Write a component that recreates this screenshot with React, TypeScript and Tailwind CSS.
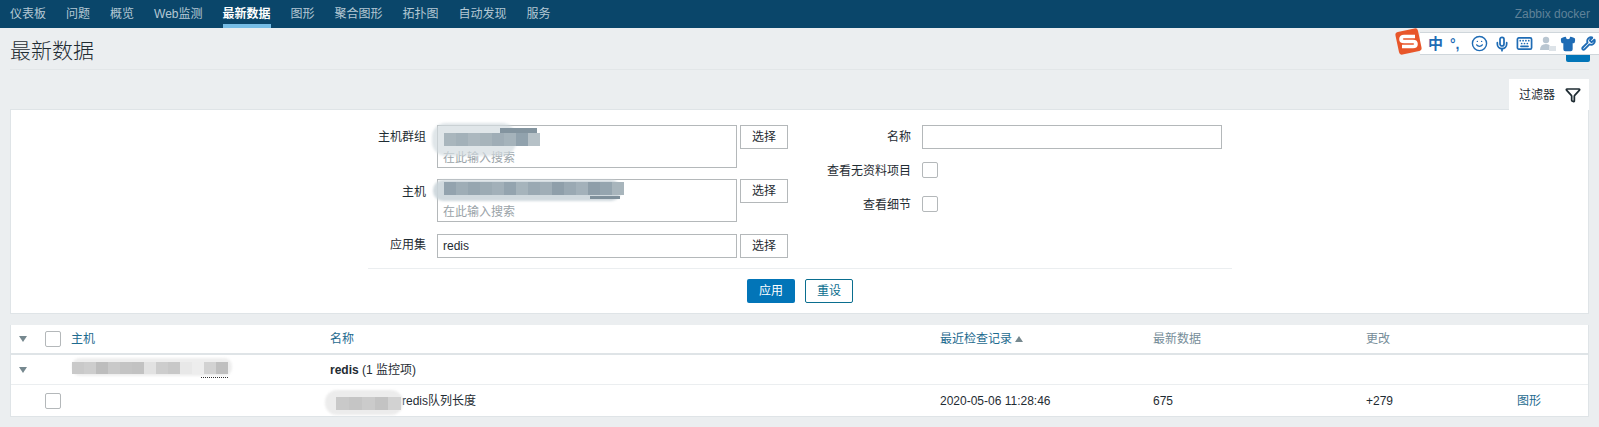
import { Funnel, Keyboard, Mic, Shirt, Smile, Wrench } from "lucide-react";

const font = { fontFamily: '"Liberation Sans","Noto Sans CJK SC",sans-serif' };
const nav = ["仪表板", "问题", "概览", "Web监测", "最新数据", "图形", "聚合图形", "拓扑图", "自动发现", "服务"];

function Mosaic({ colors, cell, className }: { colors: string[]; cell: string; className: string }) {
  return (
    <div className={"absolute flex " + className}>
      {colors.map((c, i) => (
        <span key={i} className={"h-full " + cell} style={{ backgroundColor: c }} />
      ))}
    </div>
  );
}

function Pick() {
  return (
    <button className="h-6 w-12 shrink-0 border border-[#b4b8ba] bg-white text-xs text-[#1f2c33]">选择</button>
  );
}

function Multi() {
  return (
    <div className="flex h-[43px] w-[300px] items-end border border-[#b4b8ba] bg-white px-[5px] pb-[1px] text-xs text-[#9aa3a8]">
      在此输入搜索
    </div>
  );
}

function Label({ children, w, pt = "pt-[3px]" }: { children: string; w: string; pt?: string }) {
  return <div className={"shrink-0 text-right text-xs leading-[18px] text-[#1f2c33] " + pt + " " + w}>{children}</div>;
}

function Check() {
  return <div className="h-4 w-4 rounded-[2px] border border-[#b4b8ba] bg-white" />;
}

function Tri() {
  return (
    <div className="flex pl-[8px]">
      <span className="h-0 w-0 border-x-[4px] border-t-[6px] border-x-transparent border-t-[#76888f]" />
    </div>
  );
}

export default function App() {
  return (
    <div className="relative h-[427px] w-[1599px] overflow-hidden bg-[#ebeef0] text-xs" style={font}>
      <header className="flex h-7 items-start justify-between bg-[#0a466a] pr-[9px]">
        <nav className="flex">
          {nav.map((n, i) => (
            <div
              key={n}
              className={
                "h-7 px-[10px] pt-[6px] leading-[14px] " + (i === 4 ? "font-bold text-white" : "text-[#b4c8d4]")
              }
            >
              <div className={"pt-[1px] " + (i === 4 ? "h-[22px] border-b-4 border-[#76bde6]" : "")}>{n}</div>
            </div>
          ))}
        </nav>
        <div className="pt-[7px] leading-[14px] text-[#5f8299]">Zabbix docker</div>
      </header>

      <div className="mx-[10px] flex h-[42px] items-center border-b border-[#e2e6e8] pt-[4px] text-[21px] font-light leading-none text-[#1f2c33]">
        最新数据
      </div>

      <div className="mx-[10px] mt-[9px] flex h-[31px] justify-end border-b border-[#dfe4e7]">
        <div className="flex h-[31px] w-20 items-center gap-[10px] bg-white pl-[10px] text-[#1f2c33]">
          过滤器
          <Funnel size={16} strokeWidth={2.6} className="text-[#1f2c33]" />
        </div>
      </div>

      <section className="mx-[10px] h-[204px] border-x border-b border-[#dfe4e7] bg-white pt-[15px]">
        <div className="ml-[357px] w-[864px]">
          <div className="flex h-[144px] border-b border-[#ebeef0]">
            <div className="w-[420px]">
              <div className="flex h-[54px] gap-[11px]">
                <Label w="w-[58px]">主机群组</Label>
                <Multi />
                <div className="ml-[-8px]"><Pick /></div>
              </div>
              <div className="flex h-[55px] gap-[11px]">
                <Label w="w-[58px]" pt="pt-[4px]">主机</Label>
                <Multi />
                <div className="ml-[-8px]"><Pick /></div>
              </div>
              <div className="flex gap-[11px]">
                <Label w="w-[58px]" pt="pt-[2px]">应用集</Label>
                <div className="flex h-6 w-[300px] items-center border border-[#b4b8ba] bg-white px-[5px] text-[#1f2c33]">redis</div>
                <div className="ml-[-8px]"><Pick /></div>
              </div>
            </div>
            <div>
              <div className="flex h-[37px] gap-[11px]">
                <Label w="w-[123px]">名称</Label>
                <div className="h-6 w-[300px] border border-[#b4b8ba] bg-white" />
              </div>
              <div className="flex h-[34px] gap-[11px]">
                <Label w="w-[123px]" pt="pt-[0px]">查看无资料项目</Label>
                <Check />
              </div>
              <div className="flex gap-[11px]">
                <Label w="w-[123px]" pt="pt-[0px]">查看细节</Label>
                <Check />
              </div>
            </div>
          </div>
          <div className="flex justify-center gap-[10px] pt-[10px]">
            <button className="h-6 w-12 rounded-[2px] bg-[#0275b8] text-xs text-white">应用</button>
            <button className="h-6 w-12 rounded-[2px] border border-[#0a6e8f] bg-white text-xs text-[#0a6e8f]">重设</button>
          </div>
        </div>
      </section>

      <section className="mx-[10px] mt-[11px] h-[92px] border-x border-b border-[#dfe4e7] bg-white">
        <div className="grid h-[30px] grid-cols-[34px_26px_259px_610px_213px_213px_1fr] items-center border-b-2 border-[#dfe4e7] text-[#1e6b8f]">
          <Tri />
          <Check />
          <div>主机</div>
          <div>名称</div>
          <div className="flex items-center gap-[3px]">
            最近检查记录
            <span className="h-0 w-0 border-x-[4px] border-b-[6px] border-x-transparent border-b-[#76888f]" />
          </div>
          <div className="text-[#768d99]">最新数据</div>
          <div className="text-[#768d99]">更改</div>
        </div>
        <div className="grid h-[30px] grid-cols-[34px_26px_259px_1fr] items-center border-b border-[#ebeef0] text-[#1f2c33]">
          <Tri />
          <div />
          <div />
          <div><b>redis</b> (1 监控项)</div>
        </div>
        <div className="grid h-[31px] grid-cols-[34px_26px_259px_610px_213px_213px_151px_1fr] items-center text-[#1f2c33]">
          <div />
          <Check />
          <div />
          <div className="pl-[72px]">redis队列长度</div>
          <div>2020-05-06 11:28:46</div>
          <div>675</div>
          <div>+279</div>
          <div className="text-[#1e6b8f]">图形</div>
        </div>
      </section>

      {/* 打码区域 */}
      <div className="absolute left-[432px] top-[123px] h-[33px] w-[84px] rounded-[14px] bg-[#d3dbdf]/70 blur-[1px]" />
      <Mosaic className="left-[444px] top-[133px] h-[13px]" cell="w-3" colors={["#a9b6bd", "#a3b1b9", "#acb8bf", "#a7b4bb", "#9fadb6", "#a5b3bb", "#91a2ad", "#b6c1c7"]} />
      <div className="absolute left-[500px] top-[128px] h-[5px] w-[37px] bg-[#83949f]" />
      <div className="absolute left-[433px] top-[180px] h-[21px] w-[188px] rounded-[10px] bg-[#cbd5da]/90 blur-[1px]" />
      <Mosaic className="left-[444px] top-[182px] h-[13px]" cell="w-3" colors={["#93a3ae", "#9eadb6", "#96a6b0", "#9cabb4", "#a2b0b9", "#94a4af", "#a6b4bc", "#9aa9b3", "#a0aeb7", "#8f9faa", "#9aa9b3", "#a3b1ba", "#8e9ea9", "#95a5af", "#a8b5bc"]} />
      <div className="absolute left-[590px] top-[196px] h-[3px] w-[30px] bg-[#7f909b]" />
      <div className="absolute left-[72px] top-[358px] h-[18px] w-[160px] rounded-[8px] bg-[#eeeeee] blur-[1px]" />
      <Mosaic className="left-[72px] top-[362px] h-3" cell="w-3" colors={["#c9c9c9", "#cdcdcd", "#bdbdbd", "#c9c9c9", "#c4c4c4", "#c2c2c2", "#e2e2e2", "#cdcdcd", "#c8c8c8", "#e8e8e8", "#ededed", "#d2d2d2", "#bfbfbf"]} />
      <div className="absolute left-[201px] top-[377px] w-[27px] border-t border-dotted border-[#333]" />
      <div className="absolute left-[325px] top-[390px] h-[25px] w-[78px] rounded-[12px] bg-[#ececec] blur-[1px]" />
      <Mosaic className="left-[336px] top-[397px] h-[13px]" cell="w-[13px]" colors={["#c9c9c9", "#c5c5c5", "#cbcbcb", "#c3c3c3", "#d2d2d2"]} />

      {/* 输入法工具条 */}
      <div className="absolute left-[1420px] top-[32px] flex h-[23px] w-[179px] items-center border-y border-[#cfd6db] bg-white text-[#1f6cb5]">
        <span className="ml-[8px] w-[22px] text-[15px] font-bold leading-none">中</span>
        <span className="w-[21px] text-[14px] font-bold leading-none">°,</span>
        <Smile size={17} strokeWidth={2} className="mr-[6px]" />
        <Mic size={16} strokeWidth={2.6} className="mr-[6px]" />
        <Keyboard size={17} strokeWidth={2.4} className="mr-[6px]" />
        <svg width="17" height="16" viewBox="0 0 17 16" className="mr-[4px]">
          <circle cx="7" cy="4" r="3.2" fill="#b9c6d1" />
          <path d="M1 14 Q1 8 7 8 Q10 8 11 10 V14 Z" fill="#b9c6d1" />
          <rect x="10" y="10" width="7" height="5" fill="#dde3e8" />
        </svg>
        <Shirt size={16} strokeWidth={2} className="mr-[5px] fill-[#1f6cb5]" />
        <Wrench size={15} strokeWidth={3} />
      </div>
      <svg className="absolute left-[1394px] top-[27px]" width="29" height="29" viewBox="0 0 29 29">
        <rect x="3" y="3" width="23" height="23" rx="3" fill="#e8562a" transform="rotate(-12 14.5 14.5)" />
        <path d="M21 9.5 H10 Q7 9.5 7 12 Q7 14.5 10 14.5 H19 Q22 14.5 22 17 Q22 19.5 19 19.5 H8" fill="none" stroke="#fff" strokeWidth="3.6" />
      </svg>
      <div className="absolute left-[1566px] top-[55px] h-[7px] w-6 rounded-b-[2px] bg-[#0275b8]" />
    </div>
  );
}
